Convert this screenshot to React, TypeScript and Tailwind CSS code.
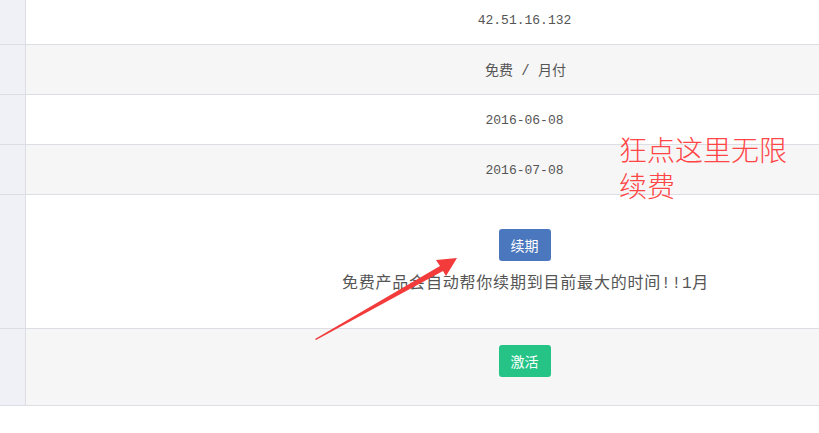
import React from "react";

const mono = { fontFamily: '"Liberation Mono", "Noto Sans CJK SC", monospace' } as React.CSSProperties;

function Row({ gray, children, className }: { gray?: boolean; children: React.ReactNode; className?: string }) {
  return (
    <div className="flex border-b border-[#dddee4]">
      <div className="w-[26px] shrink-0 bg-[#eff1f6] border-r border-[#dddee4]" />
      <div className={`flex-1 ${gray ? "bg-[#f6f6f6]" : "bg-white"} ${className ?? ""}`}>{children}</div>
    </div>
  );
}

function Cell({ children }: { children: React.ReactNode }) {
  return (
    <div className="h-[49px] pt-[3px] flex items-center justify-center text-[13px] text-[#555]" style={mono}>
      {children}
    </div>
  );
}

export default function App() {
  return (
    <div className="relative w-[819px] h-[433px] overflow-hidden bg-white">
      <div className="w-[1023px] -mt-[5px]">
        <Row>
          <Cell>42.51.16.132</Cell>
        </Row>
        <Row gray>
          <Cell>
            <span className="text-[14px] pl-[2px]">免费&nbsp;/&nbsp;月付</span>
          </Cell>
        </Row>
        <Row>
          <Cell>2016-06-08</Cell>
        </Row>
        <Row gray>
          <Cell>2016-07-08</Cell>
        </Row>
        <Row>
          <div className="h-[133px] flex flex-col items-center pt-[34px]">
            <button
              className="w-[52px] h-[32px] rounded-[3px] bg-[#4a77bd] text-white text-[14px]"
              style={{ fontFamily: '"Noto Sans CJK SC", sans-serif' }}
            >
              续期
            </button>
            <div
              className="mt-[11px] text-[16px] leading-[24px] tracking-[0.8px] text-[#555] pl-[2px]"
              style={mono}
            >
              免费产品会自动帮你续期到目前最大的时间!!1月
            </div>
          </div>
        </Row>
        <Row gray>
          <div className="h-[76px] flex flex-col items-center pt-[16px]">
            <button
              className="w-[52px] h-[32px] rounded-[3px] bg-[#25c486] text-white text-[14px]"
              style={{ fontFamily: '"Noto Sans CJK SC", sans-serif' }}
            >
              激活
            </button>
          </div>
        </Row>
      </div>

      <div
        className="absolute left-[619px] top-[131px] w-[180px] text-[28px] leading-[36px] text-[#ff4545] font-light"
        style={{ fontFamily: '"Noto Sans CJK SC", serif' }}
      >
        狂点这里无限续费
      </div>

      <svg className="absolute left-0 top-0 pointer-events-none" width="819" height="433" viewBox="0 0 819 433">
        <polygon
          points="315,339 440,266 436,260 457,258 446,276 443,271 316,340"
          fill="#f33b3b"
        />
      </svg>
    </div>
  );
}
